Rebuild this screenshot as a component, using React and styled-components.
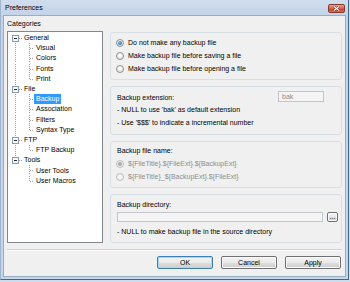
import React from 'react';
import styled, { createGlobalStyle } from 'styled-components';

const Global = createGlobalStyle`
  html, body { margin: 0; padding: 0; background: #cddbea; }
  body {
    font-family: "Liberation Sans", Arial, sans-serif;
    font-size: 7px;
    color: #000;
  }
  * { box-sizing: border-box; }
`;

const Window = styled.div`
  width: 349px;
  height: 280px;
  display: flex;
  flex-direction: column;
  background: linear-gradient(#d0ddee, #c2d3e9 16px, #c6d6ea);
  border-left: 1px solid #9fb5cf;
  border-right: 1px solid #3c6a8c;
  border-bottom: 1px solid #3c6a8c;
`;

const TitleBar = styled.div`
  height: 15px;
  flex: none;
  display: flex;
  align-items: flex-start;
  padding: 0 3px 0 4px;
`;

const TitleText = styled.span`
  line-height: 15px;
  color: #000;
`;

const CloseButton = styled.div`
  margin-left: auto;
  margin-top: 4px;
  width: 17px;
  height: 9px;
  border: 1px solid #8a3a2a;
  border-radius: 2px;
  background: linear-gradient(#e8a08f, #d3644b 50%, #c2402a 55%, #d26b52);
  display: flex;
  align-items: center;
  justify-content: center;
`;

const FrameBody = styled.div`
  flex: 1;
  display: flex;
  padding: 0 2px 2px 2px;
`;

const Client = styled.div`
  flex: 1;
  display: flex;
  flex-direction: column;
  background: #f0f0f0;
  border: 1px solid #97adc6;
  padding: 3px 3px 0 3px;
`;

const SectionLabel = styled.div`
  height: 10px;
  line-height: 10px;
  margin-bottom: 2px;
`;

const MainRow = styled.div`
  height: 212px;
  display: flex;
  gap: 7px;
`;

const TreeBox = styled.div`
  width: 96px;
  flex: none;
  background: #fff;
  border: 1px solid #828790;
  padding-top: 1px;
`;

const TreeRow = styled.div`
  height: 10.2px;
  display: flex;
  align-items: center;
`;

const TreeLabel = styled.span`
  padding: 0 2px;
  line-height: 10px;
  height: 10px;
  white-space: nowrap;
  background: ${p => (p.$selected ? '#3399ff' : 'transparent')};
  color: ${p => (p.$selected ? '#fff' : '#000')};
`;

const GuideSvg = styled.svg`
  flex: none;
  display: block;
  height: 10.2px;
`;

const RightColumn = styled.div`
  flex: 1;
  display: flex;
  flex-direction: column;
  gap: 6px;
  padding-top: 1px;
`;

const Group = styled.div`
  height: ${p => p.$h}px;
  border: 1px solid #d5dfe5;
  border-radius: 3px;
  padding: ${p => p.$pad};
  display: flex;
  flex-direction: column;
`;

const RadioRow = styled.div`
  height: 13px;
  display: flex;
  align-items: center;
  gap: 4px;
  color: ${p => (p.$disabled ? '#8d8d8d' : '#000')};
  white-space: nowrap;
`;

const RadioDot = styled.span`
  flex: none;
  width: 8px;
  height: 8px;
  border-radius: 50%;
  border: 1px solid ${p => (p.$disabled ? '#bcbcbc' : '#8b8e91')};
  background: ${p =>
    p.$disabled
      ? '#f2f2f2'
      : 'radial-gradient(circle at 50% 35%, #ffffff, #dedede)'};
  display: flex;
  align-items: center;
  justify-content: center;
  &::after {
    content: '';
    display: ${p => (p.$checked ? 'block' : 'none')};
    width: 4px;
    height: 4px;
    border-radius: 50%;
    background: ${p =>
      p.$disabled
        ? '#a9a9a9'
        : 'radial-gradient(circle at 40% 35%, #6fb8ec, #1d5b9e)'};
  }
`;

const TextLine = styled.div`
  height: ${p => p.$h || 13}px;
  line-height: ${p => p.$h || 13}px;
  margin-top: ${p => p.$mt || 0}px;
  margin-left: ${p => p.$ml || 0}px;
  white-space: nowrap;
`;

const FieldRow = styled.div`
  display: flex;
  align-items: center;
  justify-content: space-between;
  height: 11px;
`;

const TextBox = styled.div`
  height: ${p => p.$h}px;
  width: ${p => (p.$w ? `${p.$w}px` : 'auto')};
  flex: ${p => (p.$w ? 'none' : '1')};
  border: 1px solid #c2c6cc;
  background: #f4f4f4;
  color: #8c8c8c;
  padding-left: 3px;
  line-height: ${p => p.$h - 2}px;
`;

const BrowseRow = styled.div`
  display: flex;
  gap: 4px;
  height: 10px;
  margin-top: 1px;
`;

const Button = styled.div`
  width: ${p => p.$w}px;
  height: ${p => p.$h}px;
  flex: none;
  border: 1px solid ${p => (p.$default ? '#3c7fb1' : '#707070')};
  border-radius: 2px;
  background: linear-gradient(#f2f2f2, #ebebeb 50%, #dddddd 51%, #cfcfcf);
  box-shadow: ${p => (p.$default ? 'inset 0 0 0 1px #a6d8f4' : 'inset 0 0 0 1px #fbfbfb')};
  display: flex;
  align-items: center;
  justify-content: center;
  line-height: ${p => p.$h - 2}px;
  color: #000;
`;

const Separator = styled.div`
  margin-top: 6px;
  height: 2px;
  border-top: 1px solid #d3d3d3;
  border-bottom: 1px solid #fcfcfc;
`;

const ButtonRow = styled.div`
  margin-top: 5px;
  display: flex;
  justify-content: flex-end;
  gap: 8px;
  padding-right: 1px;
`;

const LINE = '#a0a0a0';

function RootGuide({ first, hasNext }) {
  const c = 5.1;
  return (
    <GuideSvg width="14" height="10.2" shapeRendering="crispEdges">
      {!first && <line x1="7.5" y1="0" x2="7.5" y2={c - 3} stroke={LINE} strokeDasharray="1 1" />}
      {hasNext && <line x1="7.5" y1={c + 3} x2="7.5" y2="10.2" stroke={LINE} strokeDasharray="1 1" />}
      <line x1="11" y1={c} x2="14" y2={c} stroke={LINE} strokeDasharray="1 1" />
      <rect x="4.5" y={c - 3} width="6" height="6" fill="#f7f7f7" stroke="#8c9aac" />
      <line x1="6" y1={c} x2="9" y2={c} stroke="#1f2a3a" />
    </GuideSvg>
  );
}

function ChildGuide({ rootContinues, last }) {
  const c = 5.1;
  return (
    <GuideSvg width="26" height="10.2" shapeRendering="crispEdges">
      {rootContinues && <line x1="7.5" y1="0" x2="7.5" y2="10.2" stroke={LINE} strokeDasharray="1 1" />}
      <line x1="21.5" y1="0" x2="21.5" y2={last ? c : 10.2} stroke={LINE} strokeDasharray="1 1" />
      <line x1="22" y1={c} x2="26" y2={c} stroke={LINE} strokeDasharray="1 1" />
    </GuideSvg>
  );
}

const tree = [
  { label: 'General', children: ['Visual', 'Colors', 'Fonts', 'Print'] },
  { label: 'File', children: ['Backup', 'Association', 'Filters', 'Syntax Type'] },
  { label: 'FTP', children: ['FTP Backup'] },
  { label: 'Tools', children: ['User Tools', 'User Macros'] },
];

function Tree() {
  const rows = [];
  tree.forEach((node, i) => {
    const hasNext = i < tree.length - 1;
    rows.push(
      <TreeRow key={node.label}>
        <RootGuide first={i === 0} hasNext={hasNext} />
        <TreeLabel>{node.label}</TreeLabel>
      </TreeRow>
    );
    node.children.forEach((child, j) => {
      rows.push(
        <TreeRow key={child}>
          <ChildGuide rootContinues={hasNext} last={j === node.children.length - 1} />
          <TreeLabel $selected={child === 'Backup'}>{child}</TreeLabel>
        </TreeRow>
      );
    });
  });
  return <TreeBox>{rows}</TreeBox>;
}

function Radio({ checked, disabled, children }) {
  return (
    <RadioRow $disabled={disabled}>
      <RadioDot $checked={checked} $disabled={disabled} />
      <span>{children}</span>
    </RadioRow>
  );
}

export default function App() {
  return (
    <>
      <Global />
      <Window>
        <TitleBar>
          <TitleText>Preferences</TitleText>
          <CloseButton>
            <svg width="7" height="5" viewBox="0 0 7 5">
              <path d="M1 0.5 L6 4.5 M6 0.5 L1 4.5" stroke="#5a1a10" strokeWidth="2.2" />
              <path d="M1 0.5 L6 4.5 M6 0.5 L1 4.5" stroke="#ffffff" strokeWidth="1.2" />
            </svg>
          </CloseButton>
        </TitleBar>
        <FrameBody>
          <Client>
            <SectionLabel>Categories</SectionLabel>
            <MainRow>
              <Tree />
              <RightColumn>
                <Group $h={48} $pad="3px 5px 0 5px">
                  <Radio checked>Do not make any backup file</Radio>
                  <Radio>Make backup file before saving a file</Radio>
                  <Radio>Make backup file before opening a file</Radio>
                </Group>
                <Group $h={49} $pad="4px 17px 0 6px">
                  <FieldRow>
                    <TextLine $h={11} $mt={1}>Backup extension:</TextLine>
                    <TextBox $w={46} $h={11}>bak</TextBox>
                  </FieldRow>
                  <TextLine $mt={1}>- NULL to use 'bak' as default extension</TextLine>
                  <TextLine>- Use '$$$' to indicate a incremental number</TextLine>
                </Group>
                <Group $h={47} $pad="2px 5px 0 5px">
                  <TextLine $ml={1}>Backup file name:</TextLine>
                  <Radio checked disabled>{'${FileTitle}.${FileExt}.${BackupExt}'}</Radio>
                  <Radio disabled>{'${FileTitle}_${BackupExt}.${FileExt}'}</Radio>
                </Group>
                <Group $h={49} $pad="3px 3px 0 6px">
                  <TextLine>Backup directory:</TextLine>
                  <BrowseRow>
                    <TextBox $h={10} />
                    <Button $w={11} $h={10}>...</Button>
                  </BrowseRow>
                  <TextLine $mt={3}>- NULL to make backup file in the source directory</TextLine>
                </Group>
              </RightColumn>
            </MainRow>
            <Separator />
            <ButtonRow>
              <Button $w={56} $h={13} $default>OK</Button>
              <Button $w={56} $h={13}>Cancel</Button>
              <Button $w={56} $h={13}>Apply</Button>
            </ButtonRow>
          </Client>
        </FrameBody>
      </Window>
    </>
  );
}
